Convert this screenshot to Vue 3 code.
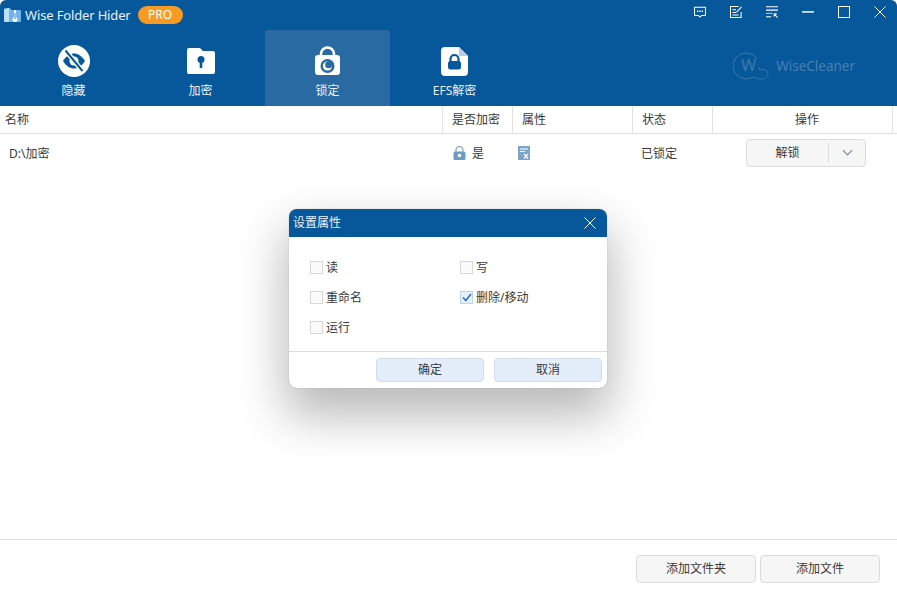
<script setup>
import { ref } from 'vue'

const tabs = [
  { key: 'hide', label: '隐藏' },
  { key: 'encrypt', label: '加密' },
  { key: 'lock', label: '锁定' },
  { key: 'efs', label: 'EFS解密' }
]
const activeTab = ref('lock')

const attrs = ref([
  { label: '读', checked: false },
  { label: '写', checked: false },
  { label: '重命名', checked: false },
  { label: '删除/移动', checked: true },
  { label: '运行', checked: false }
])
</script>

<template>
  <div class="window">
    <header class="top">
      <div class="titlebar">
        <svg class="logo" width="17" height="16" viewBox="0 0 17 16">
          <path d="M0 2.500 1 1h5l1.500 2H16a1 1 0 0 1 1 1v10a1 1 0 0 1-1 1H1a1 1 0 0 1-1-1z" fill="#6fb4ec" />
          <path d="M0 2.500 5 1v14H1a1 1 0 0 1-1-1z" fill="#bfe0f8" />
          <path d="M10 3h2v8h-2z" fill="#fff" />
          <circle cx="11" cy="12.500" r="2.500" fill="#fff" />
          <rect x="10.500" y="6" width="1" height="6" fill="#5d7f99" />
        </svg>
        <span class="app-name">Wise Folder Hider</span>
        <span class="pro">PRO</span>
        <div class="win-btns">
          <svg class="w-ico" viewBox="0 0 14 14" fill="none" stroke="#fff" stroke-width="1.200">
            <path d="M.6 1.500h12.800v9.500H9L7 13 5 11H.6z" />
            <path d="M3.500 6.200h1.600M6.200 6.200h1.600M8.900 6.200h1.600" stroke-width="1.700" />
          </svg>
          <svg class="w-ico" viewBox="0 0 14 14" fill="none" stroke="#fff" stroke-width="1.200">
            <path d="M13 7v6.400H.6V.6H10" />
            <path d="M3 4.500h4M3 7.500h4M3 10.500h7M7.500 7.500 13.500 1" />
          </svg>
          <svg class="w-ico" viewBox="0 0 14 14" fill="none" stroke="#fff" stroke-width="1.200">
            <path d="M0 1h14M0 4.800h14" />
            <path d="M0 8.600h8" stroke="#a8cbe6" />
            <path d="M0 12.600h6" />
            <path d="M9.500 9.200h3M9.500 9.200v3M9.500 9.200l4 4.300" />
          </svg>
          <span class="minimize"></span>
          <span class="maximize"></span>
          <svg class="w-ico" viewBox="0 0 12 12" fill="none" stroke="#fff">
            <path d="M.5.500l11 11M11.500.500l-11 11" />
          </svg>
        </div>
      </div>

      <div class="navbar">
        <nav class="tabs">
          <div
            v-for="tab in tabs"
            :key="tab.key"
            class="tab"
            :class="{ active: activeTab === tab.key }"
          >
            <svg v-if="tab.key === 'hide'" width="32" height="32" viewBox="0 0 32 32">
              <circle cx="16" cy="16" r="16" fill="#fff" />
              <path d="M5 16c3-5 7-7.500 11-7.500S24 11 27 16c-3 5-7 7.500-11 7.500S8 21 5 16z" fill="#07589b" />
              <circle cx="16" cy="16" r="4.500" fill="#fff" />
              <path d="M7.500 5.500 24.500 26" stroke="#fff" stroke-width="5" />
              <path d="M7.500 5.500 24.500 26" stroke="#07589b" stroke-width="2" />
            </svg>
            <svg v-else-if="tab.key === 'encrypt'" width="30" height="30" viewBox="0 1 30 30">
              <path d="M1 4a2 2 0 0 1 2-2h11l3 3h10a2 2 0 0 1 2 2v19a2 2 0 0 1-2 2H3a2 2 0 0 1-2-2z" fill="#fff" />
              <circle cx="15" cy="13.500" r="3.500" fill="#07589b" />
              <rect x="13.700" y="14" width="2.600" height="8" fill="#07589b" />
            </svg>
            <svg v-else-if="tab.key === 'lock'" width="25" height="31" viewBox="0 0 25 31">
              <path d="M6 13V8a6.500 6.500 0 0 1 13 0v5" fill="none" stroke="#fff" stroke-width="2.600" />
              <rect x="0" y="9" width="25" height="20" rx="3" fill="#fff" />
              <circle cx="12.500" cy="20" r="7" fill="#2a6aa2" />
              <circle cx="12.500" cy="20" r="4.600" fill="#fff" />
              <circle cx="13.700" cy="18.800" r="3.500" fill="#2a6aa2" />
            </svg>
            <svg v-else width="27" height="30" viewBox="0 0 27 30">
              <path d="M0 4a4 4 0 0 1 4-4h14l9 9v16a4 4 0 0 1-4 4H4a4 4 0 0 1-4-4z" fill="#fff" />
              <path d="M18 0v9h9z" fill="#b5cee3" />
              <path d="M9.500 15v-3a4 4 0 0 1 8 0v3" fill="none" stroke="#07589b" stroke-width="2.200" />
              <rect x="7" y="14" width="13" height="8.500" rx="2.500" fill="#07589b" />
            </svg>
            <span class="tab-label">{{ tab.label }}</span>
          </div>
        </nav>
        <div class="brand">
          <svg width="37" height="28" viewBox="0 0 37 28" fill="none" stroke="#3b78ad">
            <path d="M24 7A13 13 0 1 0 18 26C21 25 22 25 24 26 27 28 34 27 35 23 35.500 18 30 16 27 18 26 18 25.500 17 26 15" />
          </svg>
          <span class="brand-w">W</span>
          <span class="brand-name">WiseCleaner</span>
        </div>
      </div>
    </header>

    <main class="content">
      <div class="grid-row head">
        <div class="cell name">名称</div>
        <div class="cell">是否加密</div>
        <div class="cell">属性</div>
        <div class="cell">状态</div>
        <div class="cell center">操作</div>
      </div>
      <div class="grid-row item">
        <div class="col path">D:\加密</div>
        <div class="col enc">
          <svg width="13" height="14" viewBox="0 0 13 14">
            <path d="M3 7V4a3.500 3.500 0 0 1 7 0v3" fill="none" stroke="#8fb0cb" stroke-width="1.300" />
            <rect x="0.500" y="5.500" width="12" height="8.500" rx="1.500" fill="#6a9cc4" />
            <circle cx="6.500" cy="9.500" r="1.800" fill="#fff" />
          </svg>
          <span>是</span>
        </div>
        <div class="col attr">
          <svg width="12" height="14" viewBox="0 0 12 14">
            <rect width="12" height="14" fill="#7ca6c9" />
            <path d="M2 3h8M2 5.500h5" stroke="#fff" />
            <path d="M6 8l4 4.500M10 8l-4 4.500" stroke="#fff" stroke-width="1.300" />
          </svg>
        </div>
        <div class="col state">已锁定</div>
        <div class="col action">
          <div class="split-btn">
            <span class="split-main">解锁</span>
            <span class="split-arrow">
              <svg width="11" height="7" viewBox="0 0 12 7" fill="none" stroke="#8a96a0" stroke-width="1.300">
                <path d="M1 1l5 5 5-5" />
              </svg>
            </span>
          </div>
        </div>
      </div>
    </main>

    <footer class="bottom">
      <button class="btn">添加文件夹</button>
      <button class="btn">添加文件</button>
    </footer>

    <section class="dialog">
      <div class="dlg-head">
        <span class="dlg-title">设置属性</span>
        <svg width="12" height="12" viewBox="0 0 12 12" fill="none" stroke="#fff">
          <path d="M.5.500l11 11M11.500.500l-11 11" />
        </svg>
      </div>
      <div class="dlg-body">
        <label v-for="a in attrs" :key="a.label" class="check">
          <span class="box" :class="{ on: a.checked }">
            <svg v-if="a.checked" width="10" height="9" viewBox="0 0 10 9" fill="none" stroke="#2f74c0" stroke-width="1.600">
              <path d="M1 4.500 3.800 7.500 9 1" />
            </svg>
          </span>
          <span>{{ a.label }}</span>
        </label>
      </div>
      <div class="dlg-foot">
        <button class="dlg-btn">确定</button>
        <button class="dlg-btn">取消</button>
      </div>
    </section>
  </div>
</template>

<style>
html,
body {
  margin: 0;
  background: #fff;
}
</style>

<style scoped>
.window {
  position: relative;
  width: 897px;
  height: 596px;
  display: flex;
  flex-direction: column;
  overflow: hidden;
  background: #fff;
  color: #3a3a3a;
  font-family: "Noto Sans", "Noto Sans CJK SC", sans-serif;
  font-size: 12px;
}

.top {
  height: 106px;
  flex: none;
  background: #07589b;
  border-radius: 6px 6px 0 0;
  color: #fff;
}

.titlebar {
  height: 30px;
  display: flex;
  align-items: center;
  padding-left: 4px;
}

.logo {
  margin-right: 4px;
}

.app-name {
  font-size: 13px;
  letter-spacing: -0.15px;
  color: #e6f0f8;
}

.pro {
  margin-left: 7px;
  width: 45px;
  height: 18px;
  line-height: 18px;
  border-radius: 9px;
  background: #f79b22;
  text-align: center;
  font-size: 12px;
}

.win-btns {
  margin-left: auto;
  align-self: flex-start;
  display: flex;
  align-items: center;
  gap: 24px;
  padding-right: 11px;
  height: 24px;
}

.w-ico {
  width: 12px;
  height: 12px;
}

.minimize {
  width: 12px;
  height: 1px;
  background: #cfe0ee;
  border-bottom: 1px solid #a8c6df;
}

.maximize {
  width: 10px;
  height: 10px;
  border: 1px solid #fff;
}

.navbar {
  height: 76px;
  display: flex;
  justify-content: space-between;
}

.tabs {
  display: flex;
  gap: 2px;
  padding-left: 11px;
}

.tab {
  width: 125px;
  height: 76px;
  border-radius: 3px 3px 0 0;
  display: flex;
  flex-direction: column;
  align-items: center;
  justify-content: flex-end;
  gap: 6px;
  padding-bottom: 7px;
  box-sizing: border-box;
}

.tab.active {
  background: #2a6aa2;
}

.tab-label {
  font-size: 12px;
  line-height: 16px;
  color: #eaf2f8;
}

.brand {
  position: relative;
  display: flex;
  align-items: center;
  gap: 6px;
  height: 28px;
  margin: 22px 42px 0 0;
}

.brand-w {
  position: absolute;
  left: 8px;
  top: 2px;
  font-size: 16px;
  color: #3b78ad;
}

.brand-name {
  font-size: 13.5px;
  color: #4581b5;
}

.content {
  flex: 1;
}

.grid-row {
  display: grid;
  grid-template-columns: 442px 70px 120px 80px 181px;
}

.head {
  height: 28px;
  box-sizing: border-box;
  border-bottom: 1px solid #dfdfdf;
}

.cell {
  display: flex;
  align-items: center;
  padding: 0 0 2px 9px;
  border-left: 1px solid #e2e2e2;
}

.cell.name {
  padding-left: 5px;
  border-left: 0;
}

.cell.center {
  justify-content: center;
  padding-left: 9px;
  border-right: 1px solid #e2e2e2;
}

.item {
  height: 39px;
  align-items: center;
}

.col {
  display: flex;
  align-items: center;
  padding-bottom: 2px;
}

.path {
  padding-left: 9px;
}

.enc {
  gap: 6px;
  padding-left: 11px;
}

.attr {
  padding-left: 6px;
}

.state {
  padding-left: 9px;
}

.action {
  padding-left: 34px;
}

.split-btn {
  width: 120px;
  height: 28px;
  box-sizing: border-box;
  border: 1px solid #dcdcdc;
  border-radius: 4px;
  background: #f6f6f6;
  display: flex;
  align-items: center;
}

.split-main {
  width: 81px;
  text-align: center;
  border-right: 1px solid #dedede;
  line-height: 20px;
}

.split-arrow {
  flex: 1;
  display: flex;
  justify-content: center;
}

.bottom {
  height: 57px;
  flex: none;
  box-sizing: border-box;
  border-top: 1px solid #dfdfdf;
  padding: 15px 17px 0 0;
  display: flex;
  justify-content: flex-end;
  gap: 4px;
}

.btn {
  width: 120px;
  height: 28px;
  border: 1px solid #dcdcdc;
  border-radius: 4px;
  background: #f6f6f6;
  color: inherit;
  font: inherit;
  padding: 0 0 2px;
}

.dialog {
  position: absolute;
  left: 289px;
  top: 209px;
  width: 318px;
  height: 179px;
  display: flex;
  flex-direction: column;
  border-radius: 8px;
  overflow: hidden;
  background: #fff;
  box-shadow: 0 0 1px 0 #8a8a8a, 0 24px 48px 4px rgba(0, 0, 0, 0.28);
}

.dlg-head {
  height: 28px;
  flex: none;
  background: #07589b;
  color: #e8f1f8;
  font-size: 12px;
  display: flex;
  align-items: center;
  justify-content: space-between;
  padding: 0 11px 0 4px;
}

.dlg-title {
  padding-bottom: 2px;
}

.dlg-body {
  flex: 1;
  display: grid;
  grid-template-columns: 150px 1fr;
  grid-auto-rows: 30px;
  padding: 15px 0 0 21px;
}

.check {
  display: flex;
  align-items: center;
  gap: 3px;
  height: 30px;
}

.box {
  width: 11px;
  height: 11px;
  border: 0.5px solid #d8d8d8;
  background: #fafafa;
  display: flex;
  align-items: center;
  justify-content: center;
}

.box.on {
  border-color: #b9d3ec;
  background: #e6f0fa;
}

.dlg-foot {
  height: 37px;
  flex: none;
  box-sizing: border-box;
  border-top: 1px solid #dcdcdc;
  padding: 6px 5px 0 0;
  display: flex;
  justify-content: flex-end;
  gap: 10px;
}

.dlg-btn {
  width: 108px;
  height: 24px;
  border: 1px solid #d3dde8;
  border-radius: 4px;
  background: #e4eefa;
  color: inherit;
  font: inherit;
  padding: 0 0 2px;
}
</style>
